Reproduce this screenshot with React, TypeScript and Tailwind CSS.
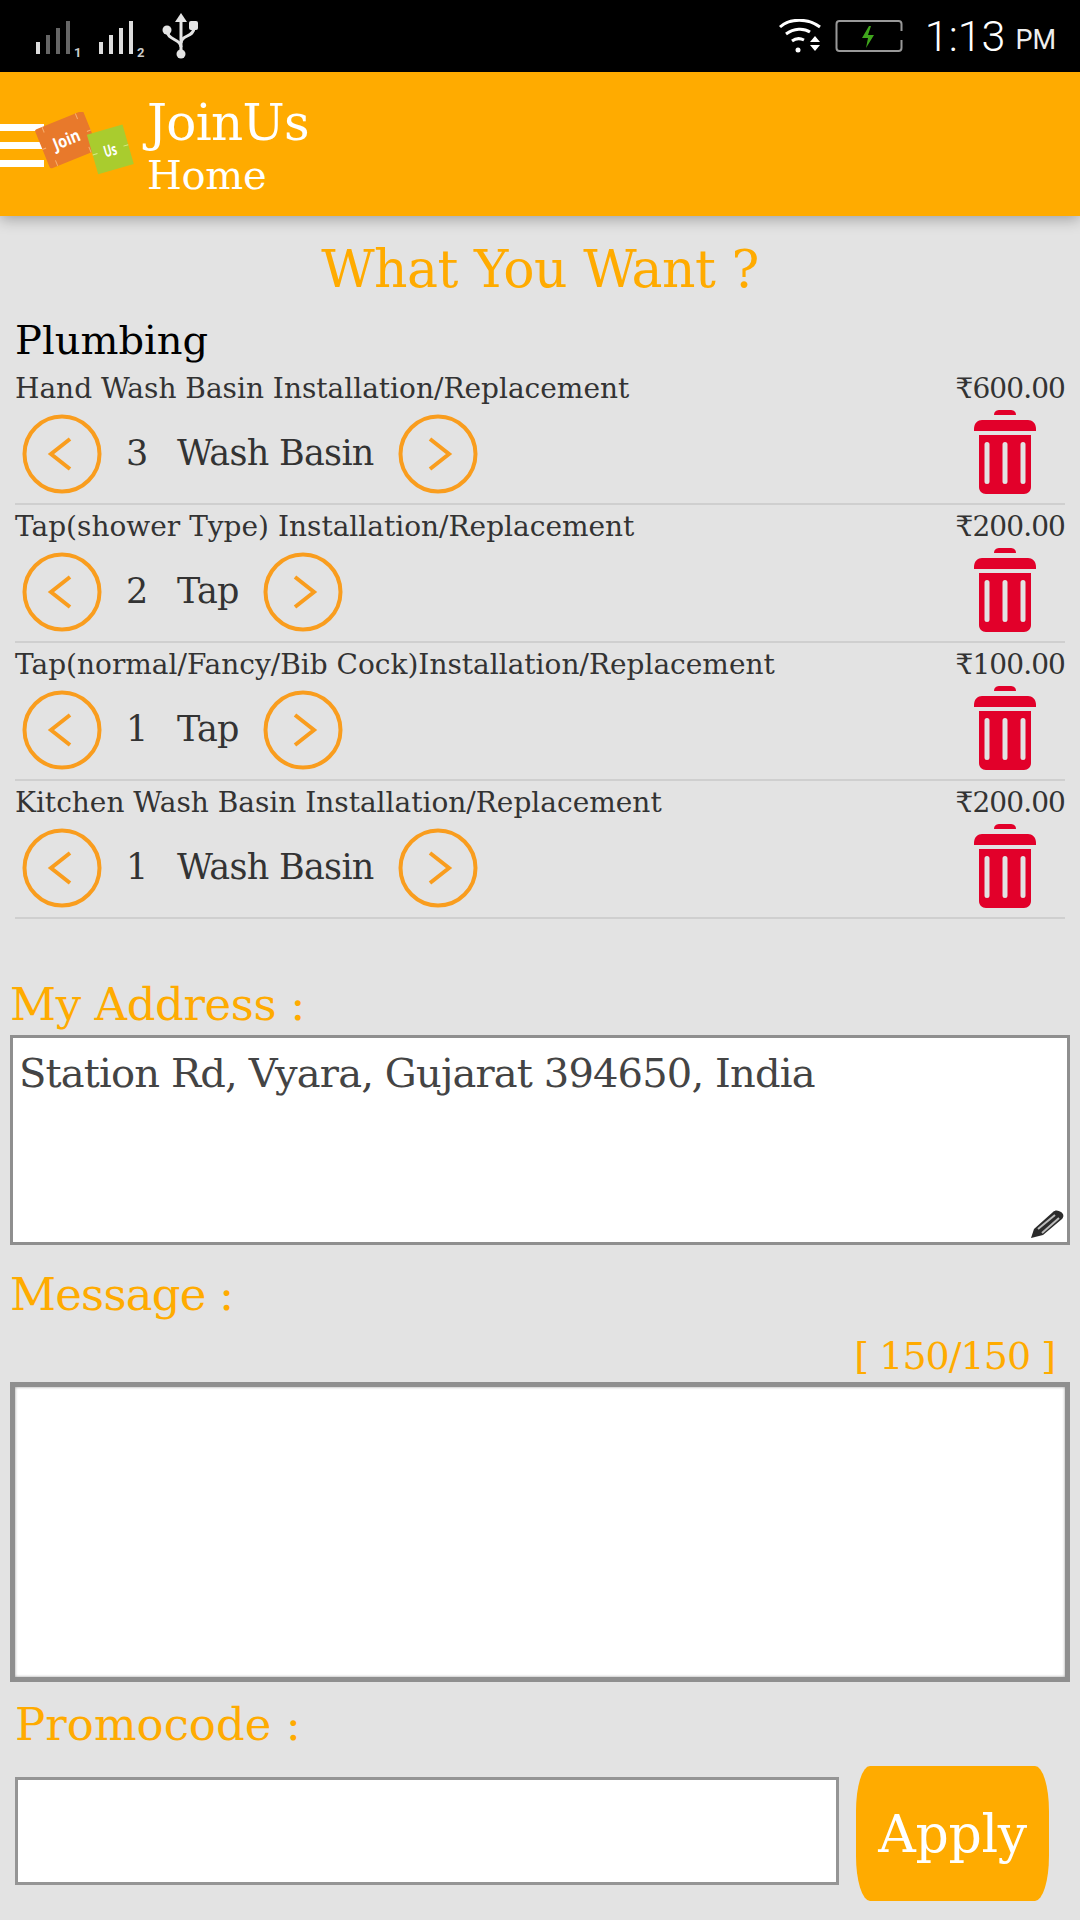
const rows = [
  { name: "Hand Wash Basin Installation/Replacement", price: "₹600.00", qty: 3, unit: "Wash Basin" },
  { name: "Tap(shower Type) Installation/Replacement", price: "₹200.00", qty: 2, unit: "Tap" },
  { name: "Tap(normal/Fancy/Bib Cock)Installation/Replacement", price: "₹100.00", qty: 1, unit: "Tap" },
  { name: "Kitchen Wash Basin Installation/Replacement", price: "₹200.00", qty: 1, unit: "Wash Basin" },
];

function Signal({ n, dim }: { n: string; dim?: boolean }) {
  return (
    <svg width="50" height="46" viewBox="0 0 50 46">
      <rect x="0" y="29" width="4" height="12" fill="#ddd" />
      <rect x="10" y="22" width="4" height="19" fill={dim ? "#666" : "#ddd"} />
      <rect x="20" y="15" width="4" height="26" fill={dim ? "#666" : "#ddd"} />
      <rect x="30" y="8" width="4" height="33" fill={dim ? "#666" : "#ddd"} />
      <text x="38" y="44" fontSize="13" fontWeight="700" fill="#ccc" fontFamily="Roboto">{n}</text>
    </svg>
  );
}

function Usb() {
  return (
    <svg width="38" height="46" viewBox="0 0 38 46" fill="none" stroke="#e4e4e4" strokeWidth="3">
      <path d="M19 6V40" />
      <path d="M19 0l6 9H13z" fill="#e4e4e4" stroke="none" />
      <circle cx="19" cy="41" r="4.500" fill="#e4e4e4" stroke="none" />
      <circle cx="5" cy="17" r="4.500" fill="#e4e4e4" stroke="none" />
      <rect x="27" y="8" width="9" height="9" rx="2" fill="#e4e4e4" stroke="none" />
      <path d="M5 18c0 9 14 8 14 16" />
      <path d="M32 15c0 9-13 7-13 15" />
    </svg>
  );
}

function Wifi() {
  return (
    <svg width="46" height="34" viewBox="0 0 46 34" fill="none" stroke="#fff" strokeWidth="3">
      <path d="M2 8C12-1 30-1 42 8" />
      <path d="M8 15c8-6 18-6 24-2" />
      <path d="M14 22c4-3 8-3 12-1" />
      <circle cx="20" cy="31" r="2.500" fill="#fff" stroke="none" />
      <path d="M37 17l5 6H32z M37 32l-5-6h10z" fill="#fff" stroke="none" />
    </svg>
  );
}

function Battery() {
  return (
    <svg width="70" height="34" viewBox="0 0 70 34" fill="none">
      <rect x="1.500" y="2" width="65" height="30" rx="3" stroke="#999" strokeWidth="2" />
      <rect x="65" y="12" width="4" height="9" fill="#000" />
      <path d="M34 7l-7 12h6l-2 10 8-13h-6l3-9z" fill="#3fa51c" />
    </svg>
  );
}

function Logo() {
  return (
    <svg width="104" height="66" viewBox="0 0 104 66">
      <g transform="rotate(-22 34 26)">
        <rect x="6" y="6" width="52" height="42" rx="2" fill="#e8792b" />
        <path d="M14 6v6M50 6v6M14 42v6M50 42v6M6 27h4M54 27h4" stroke="#f5b070" strokeWidth="1" />
        <text x="32" y="33" textAnchor="middle" fontSize="17" fontWeight="700" fill="#fff" fontFamily="Open Sans" textLength="28" lengthAdjust="spacingAndGlyphs">Join</text>
      </g>
      <g transform="rotate(-16 76 38)">
        <rect x="58" y="17" width="37" height="41" fill="#a9cc2e" />
        <path d="M58 38h5M90 38h5" stroke="#d9e98a" strokeWidth="1" />
        <text x="76" y="44" textAnchor="middle" fontSize="16" fontWeight="700" fill="#fff" fontFamily="Open Sans" textLength="13" lengthAdjust="spacingAndGlyphs">Us</text>
      </g>
    </svg>
  );
}

function Stepper({ dir }: { dir: "left" | "right" }) {
  return (
    <svg width="80" height="80" viewBox="0 0 80 80" fill="none" stroke="#f99d1e" className="shrink-0">
      <circle cx="40" cy="40" r="37.500" strokeWidth="4" />
      <path d={dir === "left" ? "M48 25L29 40l19 15" : "M32 25l19 15-19 15"} strokeWidth="4" />
    </svg>
  );
}

function Trash() {
  return (
    <svg width="64" height="86" viewBox="0 0 64 86" fill="#e2002a" className="-mt-[3px]">
      <path d="M21 6c0-4 3-5 6-5h10c3 0 6 1 6 5z" />
      <path d="M1 20c0-6 4-9 8-9h46c4 0 8 3 8 9v2H1z" />
      <path fillRule="evenodd" d="M6 26h52v52c0 4-3 7-7 7H13c-4 0-7-3-7-7zM14 33a2.500 2.500 0 0 0-2.500 2.500v37a2.500 2.500 0 0 0 5 0v-37A2.500 2.500 0 0 0 14 33zM32 33a2.500 2.500 0 0 0-2.500 2.500v37a2.500 2.500 0 0 0 5 0v-37A2.500 2.500 0 0 0 32 33zM50 33a2.500 2.500 0 0 0-2.500 2.500v37a2.500 2.500 0 0 0 5 0v-37A2.500 2.500 0 0 0 50 33z" />
    </svg>
  );
}

function Pencil() {
  return (
    <svg width="34" height="30" viewBox="0 0 34 30" className="absolute bottom-[3px] right-[3px]">
      <path d="M1 29l3-9L23 3c2-2 5-2 8 0s3 5 1 7L13 26z" fill="#2b2b2b" />
      <path d="M8 20L25 6M12 24L29 9" stroke="#bbb" strokeWidth="2" />
    </svg>
  );
}

export default function App() {
  return (
    <div className="flex h-[1920px] w-[1080px] flex-col overflow-hidden bg-[#e3e3e3] font-['DejaVu_Serif',serif]">
      <div className="flex h-[72px] shrink-0 items-center bg-black text-[#eee]">
        <div className="ml-[36px] flex items-center gap-[13px]">
          <Signal n="1" dim />
          <Signal n="2" />
          <Usb />
        </div>
        <div className="ml-auto flex items-center pr-[24px] font-['Roboto',sans-serif]">
          <Wifi />
          <div className="ml-[11px]"><Battery /></div>
          <span className="ml-[20px] text-[43px] font-light leading-none text-white">1:13</span>
          <span className="ml-[10px] mt-[8px] text-[27px] leading-none">PM</span>
        </div>
      </div>

      <header className="relative z-10 flex h-[144px] shrink-0 items-center bg-[#ffab00] text-white shadow-[0_3px_14px_rgba(0,0,0,0.3)]">
        <div className="mt-[2px] flex w-[44px] flex-col gap-[11px]">
          <div className="h-[7px] bg-white" />
          <div className="h-[7px] bg-white" />
          <div className="h-[7px] bg-white" />
        </div>
        <div className="-ml-[10px] mt-[2px]"><Logo /></div>
        <div className="ml-[9px] flex flex-col">
          <span className="text-[50px] leading-[58px] tracking-[-0.7px]">JoinUs</span>
          <span className="mt-[3px] text-[40px] leading-[40px] tracking-[-0.3px]">Home</span>
        </div>
      </header>

      <h1 className="mt-[25px] text-center text-[52px] leading-[56px] tracking-[-0.5px] text-[#ffab00]">What You Want ?</h1>
      <h2 className="mt-[20px] pl-[15px] text-[40px] leading-[46px] text-black">Plumbing</h2>

      <div className="mx-[15px] mt-[4px]">
        {rows.map((r) => (
          <div key={r.name} className="h-[138px] border-b-2 border-[#cfcfcf] text-[#333]">
            <div className="flex items-center justify-between pt-[4px] text-[28px] leading-[36px]">
              <span>{r.name}</span>
              <span className="tracking-[-0.9px]">{r.price}</span>
            </div>
            <div className="mt-[5px] flex items-center justify-between pl-[7px] pr-[28px]">
              <div className="flex items-center text-[35px] tracking-[-0.7px]">
                <Stepper dir="left" />
                <span className="ml-[24px] w-[51px]">{r.qty}</span>
                <span>{r.unit}</span>
                <span className="ml-[24px]"><Stepper dir="right" /></span>
              </div>
              <Trash />
            </div>
          </div>
        ))}
      </div>

      <div className="mt-[58px] pl-[10px] text-[45px] leading-[56px] tracking-[-0.4px] text-[#ffab00]">My Address :</div>
      <div className="relative mx-[10px] mt-[2px] h-[210px] shrink-0 border-[3px] border-[#8f8f8f] bg-white px-[6px] py-[11px] text-[40px] leading-[48px] tracking-[-0.85px] text-[#444]">
        Station Rd, Vyara, Gujarat 394650, India
        <Pencil />
      </div>

      <div className="mt-[22px] pl-[10px] text-[45px] leading-[56px] tracking-[-0.8px] text-[#ffab00]">Message :</div>
      <div className="mt-[11px] pr-[25px] text-right text-[38px] leading-[44px] tracking-[-1px] text-[#ffab00]">[ 150/150 ]</div>
      <div className="mx-[10px] mt-[4px] h-[300px] shrink-0 border-[5px] border-[#8f8f8f] bg-white shadow-[inset_0_0_3px_rgba(0,0,0,0.4)]" />

      <div className="mt-[15px] pl-[15px] text-[45px] leading-[56px] text-[#ffab00]">Promocode :</div>
      <div className="mt-[13px] flex items-center pl-[15px]">
        <div className="mb-[6px] h-[108px] w-[824px] border-[3px] border-[#959595] bg-white" />
        <button className="ml-[17px] flex h-[135px] w-[193px] items-center justify-center rounded-[14px/45px] bg-[#ffab00] text-[52px] tracking-[-0.3px] text-white">
          Apply
        </button>
      </div>
    </div>
  );
}
